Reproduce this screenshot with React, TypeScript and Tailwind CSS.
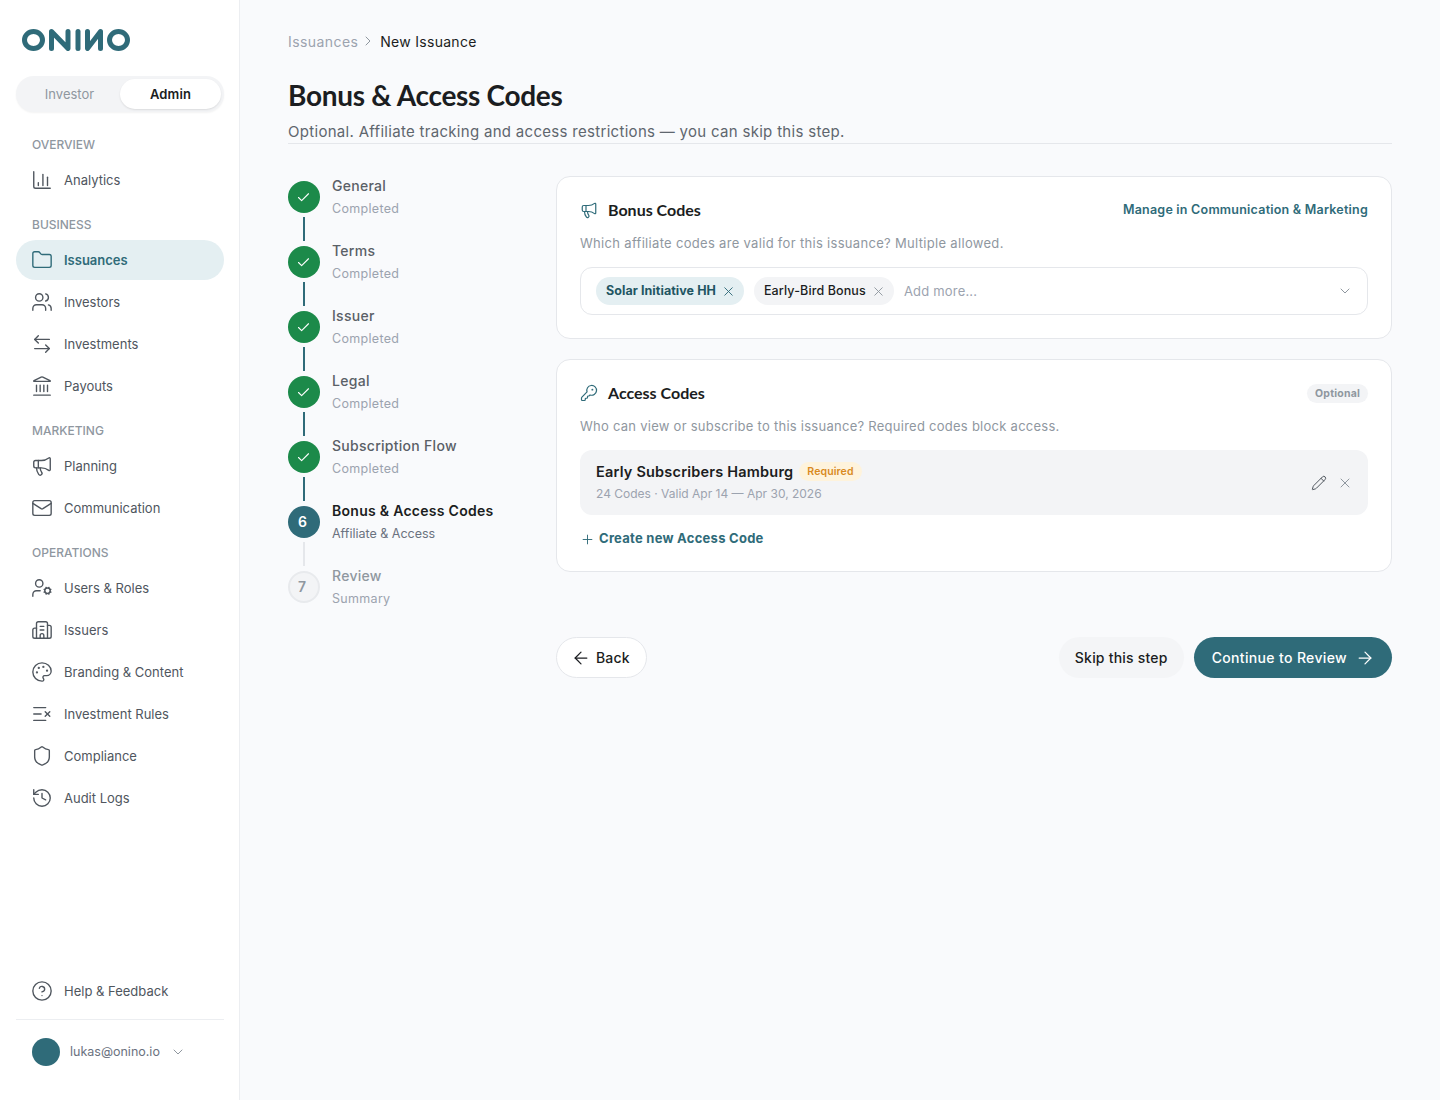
import React from 'react';
import {
  ArrowLeft,
  ArrowLeftRight,
  ArrowRight,
  Building2,
  Check,
  ChevronDown,
  ChevronRight,
  CircleHelp,
  Folder,
  History,
  KeyRound,
  Landmark,
  ListX,
  Mail,
  Megaphone,
  Palette,
  Pencil,
  Plus,
  Shield,
  UserCog,
  Users,
  X,
} from 'lucide-react';

const ChartIcon: React.FC<{ size?: number; strokeWidth?: number; className?: string }> = ({
  size = 22,
  strokeWidth = 1.5,
  className,
}) => (
  <svg
    width={size}
    height={size}
    viewBox="0 0 24 24"
    fill="none"
    stroke="currentColor"
    strokeWidth={strokeWidth}
    strokeLinecap="round"
    strokeLinejoin="round"
    className={className}
  >
    <path d="M3 3v16a2 2 0 0 0 2 2h16" />
    <path d="M8 18v-3" />
    <path d="M13 18V6" />
    <path d="M18 18V9" />
  </svg>
);

const Logo: React.FC = () => (
  <svg width="108" height="22" viewBox="0 0 108 22" fill="none" stroke="#2f6b79" strokeWidth="5" strokeLinejoin="round" strokeLinecap="round">
    <ellipse cx="11.5" cy="11" rx="9" ry="8.5" />
    <path d="M29.5 19.5V2.5L46 19.5V2.5" />
    <path d="M56 2.5v17" />
    <path d="M78.5 19.5V2.5L65.5 19.5V2.5" />
    <ellipse cx="96.5" cy="11" rx="9" ry="8.5" />
  </svg>
);

type NavItem = { label: string; icon: React.ElementType; active?: boolean };

const navSections: { title: string; items: NavItem[] }[] = [
  { title: 'OVERVIEW', items: [{ label: 'Analytics', icon: ChartIcon }] },
  {
    title: 'BUSINESS',
    items: [
      { label: 'Issuances', icon: Folder, active: true },
      { label: 'Investors', icon: Users },
      { label: 'Investments', icon: ArrowLeftRight },
      { label: 'Payouts', icon: Landmark },
    ],
  },
  {
    title: 'MARKETING',
    items: [
      { label: 'Planning', icon: Megaphone },
      { label: 'Communication', icon: Mail },
    ],
  },
  {
    title: 'OPERATIONS',
    items: [
      { label: 'Users & Roles', icon: UserCog },
      { label: 'Issuers', icon: Building2 },
      { label: 'Branding & Content', icon: Palette },
      { label: 'Investment Rules', icon: ListX },
      { label: 'Compliance', icon: Shield },
      { label: 'Audit Logs', icon: History },
    ],
  },
];

const NavRow: React.FC<{ item: NavItem }> = ({ item }) => {
  const Icon = item.icon;
  return (
    <a
      className={
        item.active
          ? 'flex h-10 items-center gap-[11px] rounded-full bg-[#e4eff2] pl-[15px] text-[13px] font-semibold text-[#2f6b79]'
          : 'flex h-10 items-center gap-[11px] rounded-full pl-[15px] text-[13px] text-[#4f565e]'
      }
    >
      <Icon size={22} strokeWidth={1.5} className="shrink-0" />
      <span className="pt-px">{item.label}</span>
    </a>
  );
};

const Sidebar: React.FC = () => (
  <aside className="flex h-[1100px] w-[240px] shrink-0 flex-col border-r border-[#eceef1] bg-white pr-[15px] pl-4">
    <div className="mt-[29px] ml-[6px]">
      <Logo />
    </div>

    <div className="mt-[25px] grid h-9 w-[208px] grid-cols-2 rounded-full bg-[#f3f4f6] p-[3px] text-[13px] shadow-[0_1px_2px_rgba(0,0,0,0.05)]">
      <div className="flex items-center justify-center pt-px text-[#8f979f]">Investor</div>
      <div className="flex items-center justify-center rounded-full bg-white pt-px font-semibold tracking-[0.01em] text-[#1b1d21] shadow-[0_1px_2px_rgba(0,0,0,0.1)]">
        Admin
      </div>
    </div>

    <nav className="mt-[24px]">
      {navSections.map((section, i) => (
        <div key={section.title} className={i > 0 ? 'mt-4' : ''}>
          <div className="mb-[6px] h-[18px] pl-4 text-[12px] leading-[18px] font-medium text-[#8f979f]">
            {section.title}
          </div>
          <div className="flex flex-col gap-[2px]">
            {section.items.map((item) => (
              <NavRow key={item.label} item={item} />
            ))}
          </div>
        </div>
      ))}
    </nav>

    <div className="mt-auto">
      <NavRow item={{ label: 'Help & Feedback', icon: CircleHelp }} />
      <div className="mt-2 flex items-center gap-[10px] border-t border-[#eceef1] pt-[18px] pb-[34px] pl-4">
        <div className="h-7 w-7 rounded-full bg-[#2f6b79]" />
        <span className="text-[12.5px] text-[#6b7280]">lukas@onino.io</span>
        <ChevronDown size={16} strokeWidth={1.5} className="text-[#8f979f]" />
      </div>
    </div>
  </aside>
);

const steps = [
  { title: 'General', sub: 'Completed', state: 'done' },
  { title: 'Terms', sub: 'Completed', state: 'done' },
  { title: 'Issuer', sub: 'Completed', state: 'done' },
  { title: 'Legal', sub: 'Completed', state: 'done' },
  { title: 'Subscription Flow', sub: 'Completed', state: 'done' },
  { title: 'Bonus & Access Codes', sub: 'Affiliate & Access', state: 'current', n: 6 },
  { title: 'Review', sub: 'Summary', state: 'todo', n: 7 },
];

const Stepper: React.FC = () => (
  <div className="w-[268px] shrink-0">
    {steps.map((step, i) => (
      <div key={step.title} className="flex gap-3">
        <div className="flex w-8 flex-col items-center pt-[5px]">
          {step.state === 'done' && (
            <div className="flex h-8 w-8 items-center justify-center rounded-full bg-[#1c8a4a] pr-px text-white">
              <Check size={15} strokeWidth={1.75} />
            </div>
          )}
          {step.state === 'current' && (
            <div className="flex h-8 w-8 items-center justify-center rounded-full bg-[#2f6b79] pr-[3px] pb-px text-[14px] font-semibold text-white">
              {step.n}
            </div>
          )}
          {step.state === 'todo' && (
            <div className="flex h-8 w-8 items-center justify-center rounded-full border-2 border-[#e8eaed] bg-[#f3f4f6] pr-1 pb-px text-[14px] font-semibold text-[#8f979f]">
              {step.n}
            </div>
          )}
          {i < steps.length - 1 && (
            <div className={step.state === 'done' ? 'mt-1 h-6 w-[2px] bg-[#2f6b79]' : 'mt-1 h-6 w-[2px] bg-[#e5e7eb]'} />
          )}
        </div>
        <div>
          <div
            className={
              step.state === 'current'
                ? 'text-[14px] leading-5 font-semibold tracking-[0.02em] text-[#1b1d21]'
                : step.state === 'done'
                  ? 'text-[14px] leading-5 font-medium tracking-[0.02em] text-[#5a6067]'
                  : 'text-[14px] leading-5 font-medium tracking-[0.02em] text-[#8f979f]'
            }
          >
            {step.title}
          </div>
          <div
            className={
              step.state === 'current'
                ? 'mt-[3px] text-[12.5px] leading-5 text-[#6b7280]'
                : 'mt-[3px] text-[12.5px] leading-5 tracking-[0.025em] text-[#9ca3af]'
            }
          >
            {step.sub}
          </div>
        </div>
      </div>
    ))}
  </div>
);

const Chip: React.FC<{ label: string; teal?: boolean }> = ({ label, teal }) => (
  <div
    className={
      teal
        ? 'flex h-7 items-center gap-[5px] rounded-full bg-[#e4eff2] pr-2 pl-[10px] text-[12.5px] font-bold tracking-[0.005em] text-[#1f5663]'
        : 'flex h-7 items-center gap-[5px] rounded-full bg-[#f3f4f6] pr-2 pl-[10px] text-[12.5px] font-medium tracking-[0.01em] text-[#1b1d21]'
    }
  >
    <span className="pt-px">{label}</span>
    <X size={15} strokeWidth={1.5} className={teal ? 'text-[#2f6b79]' : 'text-[#8f979f]'} />
  </div>
);

const BonusCard: React.FC = () => (
  <section className="rounded-[14px] border border-[#e5e7eb] bg-white px-[23px] pt-[23px] pb-[23px]">
    <div className="flex h-5 items-center justify-between">
      <div className="flex items-center gap-[10px]">
        <Megaphone size={18} strokeWidth={1.6} className="text-[#2f6b79]" />
        <h2 className="font-[Lato,sans-serif] text-[16px] font-bold text-[#1b1d21]">Bonus Codes</h2>
      </div>
      <a className="text-[12.5px] font-semibold tracking-[0.018em] text-[#2f6b79]">Manage in Communication &amp; Marketing</a>
    </div>
    <p className="mt-[13px] text-[13px] leading-5 tracking-[0.024em] text-[#8f979f]">
      Which affiliate codes are valid for this issuance? Multiple allowed.
    </p>
    <div className="mt-[14px] flex h-12 items-center rounded-xl border border-[#e5e7eb] pr-[14px] pl-[15px]">
      <div className="flex items-center gap-[10px]">
        <Chip label="Solar Initiative HH" teal />
        <Chip label="Early-Bird Bonus" />
        <span className="pt-px text-[13px] tracking-[0.015em] text-[#9ca3af]">Add more...</span>
      </div>
      <ChevronDown size={16} strokeWidth={1.5} className="ml-auto text-[#8f979f]" />
    </div>
  </section>
);

const AccessCard: React.FC = () => (
  <section className="rounded-[14px] border border-[#e5e7eb] bg-white px-[23px] pt-[23px] pb-[22px]">
    <div className="flex h-5 items-center justify-between">
      <div className="flex items-center gap-[10px]">
        <KeyRound size={18} strokeWidth={1.6} className="text-[#2f6b79]" />
        <h2 className="font-[Lato,sans-serif] text-[16px] font-bold text-[#1b1d21]">Access Codes</h2>
      </div>
      <span className="flex h-[19px] items-center rounded-full bg-[#f3f4f6] px-2 pt-px text-[10.5px] font-bold tracking-[0.02em] text-[#8f979f]">
        Optional
      </span>
    </div>
    <p className="mt-[13px] text-[13px] leading-5 tracking-[0.02em] text-[#8f979f]">
      Who can view or subscribe to this issuance? Required codes block access.
    </p>
    <div className="mt-[14px] flex h-[65px] items-center rounded-xl bg-[#f3f4f6] pr-[15px] pl-4">
      <div>
        <div className="flex items-center gap-[6px]">
          <span className="text-[14.5px] leading-5 font-semibold tracking-[0.014em] text-[#1b1d21]">Early Subscribers Hamburg</span>
          <span className="flex h-[19px] items-center rounded-full bg-[#fef3dc] px-2 text-[10.5px] font-semibold tracking-[0.01em] text-[#d98a1f]">
            Required
          </span>
        </div>
        <div className="mt-[2px] text-[12px] leading-5 text-[#9ca3af]">24 Codes · Valid Apr 14 — Apr 30, 2026</div>
      </div>
      <div className="ml-auto flex items-center gap-[10px]">
        <Pencil size={16} strokeWidth={1.5} className="text-[#4f565e]" />
        <X size={16} strokeWidth={1.5} className="text-[#8f979f]" />
      </div>
    </div>
    <a className="mt-[14px] flex h-5 items-center gap-1 text-[13px] font-bold tracking-[0.02em] text-[#2f6b79]">
      <Plus size={15} strokeWidth={1.5} />
      Create new Access Code
    </a>
  </section>
);

const App: React.FC = () => {
  return (
    <div className="flex min-h-screen bg-[#f9fafc] font-[Inter,sans-serif]">
      <Sidebar />
      <main className="min-w-0 flex-1 px-12 pt-[31px]">
        <div className="flex h-5 items-center text-[14px] tracking-[0.02em]">
          <span className="tracking-[0.03em] text-[#9ca3af]">Issuances</span>
          <ChevronRight size={16} strokeWidth={1.5} className="mr-1 ml-[2px] text-[#8f979f]" />
          <span className="text-[#1b1d21]">New Issuance</span>
        </div>

        <h1 className="mt-[26px] font-[Lato,sans-serif] text-[28px] leading-9 font-bold tracking-[-0.3px] text-[#1b1d21]">Bonus &amp; Access Codes</h1>
        <p className="mt-[7px] h-6 border-b border-[#e5e7eb] text-[15px] leading-[23px] tracking-[0.02em] text-[#5f666e]">
          Optional. Affiliate tracking and access restrictions — you can skip this step.
        </p>

        <div className="mt-8 flex">
          <Stepper />
          <div className="min-w-0 flex-1">
            <div className="flex flex-col gap-5">
              <BonusCard />
              <AccessCard />
            </div>
            <div className="mt-[65px] flex items-center">
              <button className="flex h-[41px] items-center gap-[5px] rounded-full border border-[#e5e7eb] bg-white pr-4 pl-[14px] text-[14px] font-medium tracking-[0.01em] text-[#1b1d21]">
                <ArrowLeft size={20} strokeWidth={1.5} />
                <span className="pb-px">Back</span>
              </button>
              <button className="ml-auto flex h-[41px] items-center rounded-full bg-[#f4f5f7] px-4 pb-px text-[14px] font-medium tracking-[0.015em] text-[#1b1d21]">
                Skip this step
              </button>
              <button className="ml-[10px] flex h-[41px] items-center gap-2 rounded-full bg-[#2f6b79] pr-[17px] pl-[18px] text-[14px] font-medium tracking-[0.025em] text-white">
                <span className="pb-px">Continue to Review</span>
                <ArrowRight size={20} strokeWidth={1.5} />
              </button>
            </div>
          </div>
        </div>
      </main>
    </div>
  );
};

export default App;
